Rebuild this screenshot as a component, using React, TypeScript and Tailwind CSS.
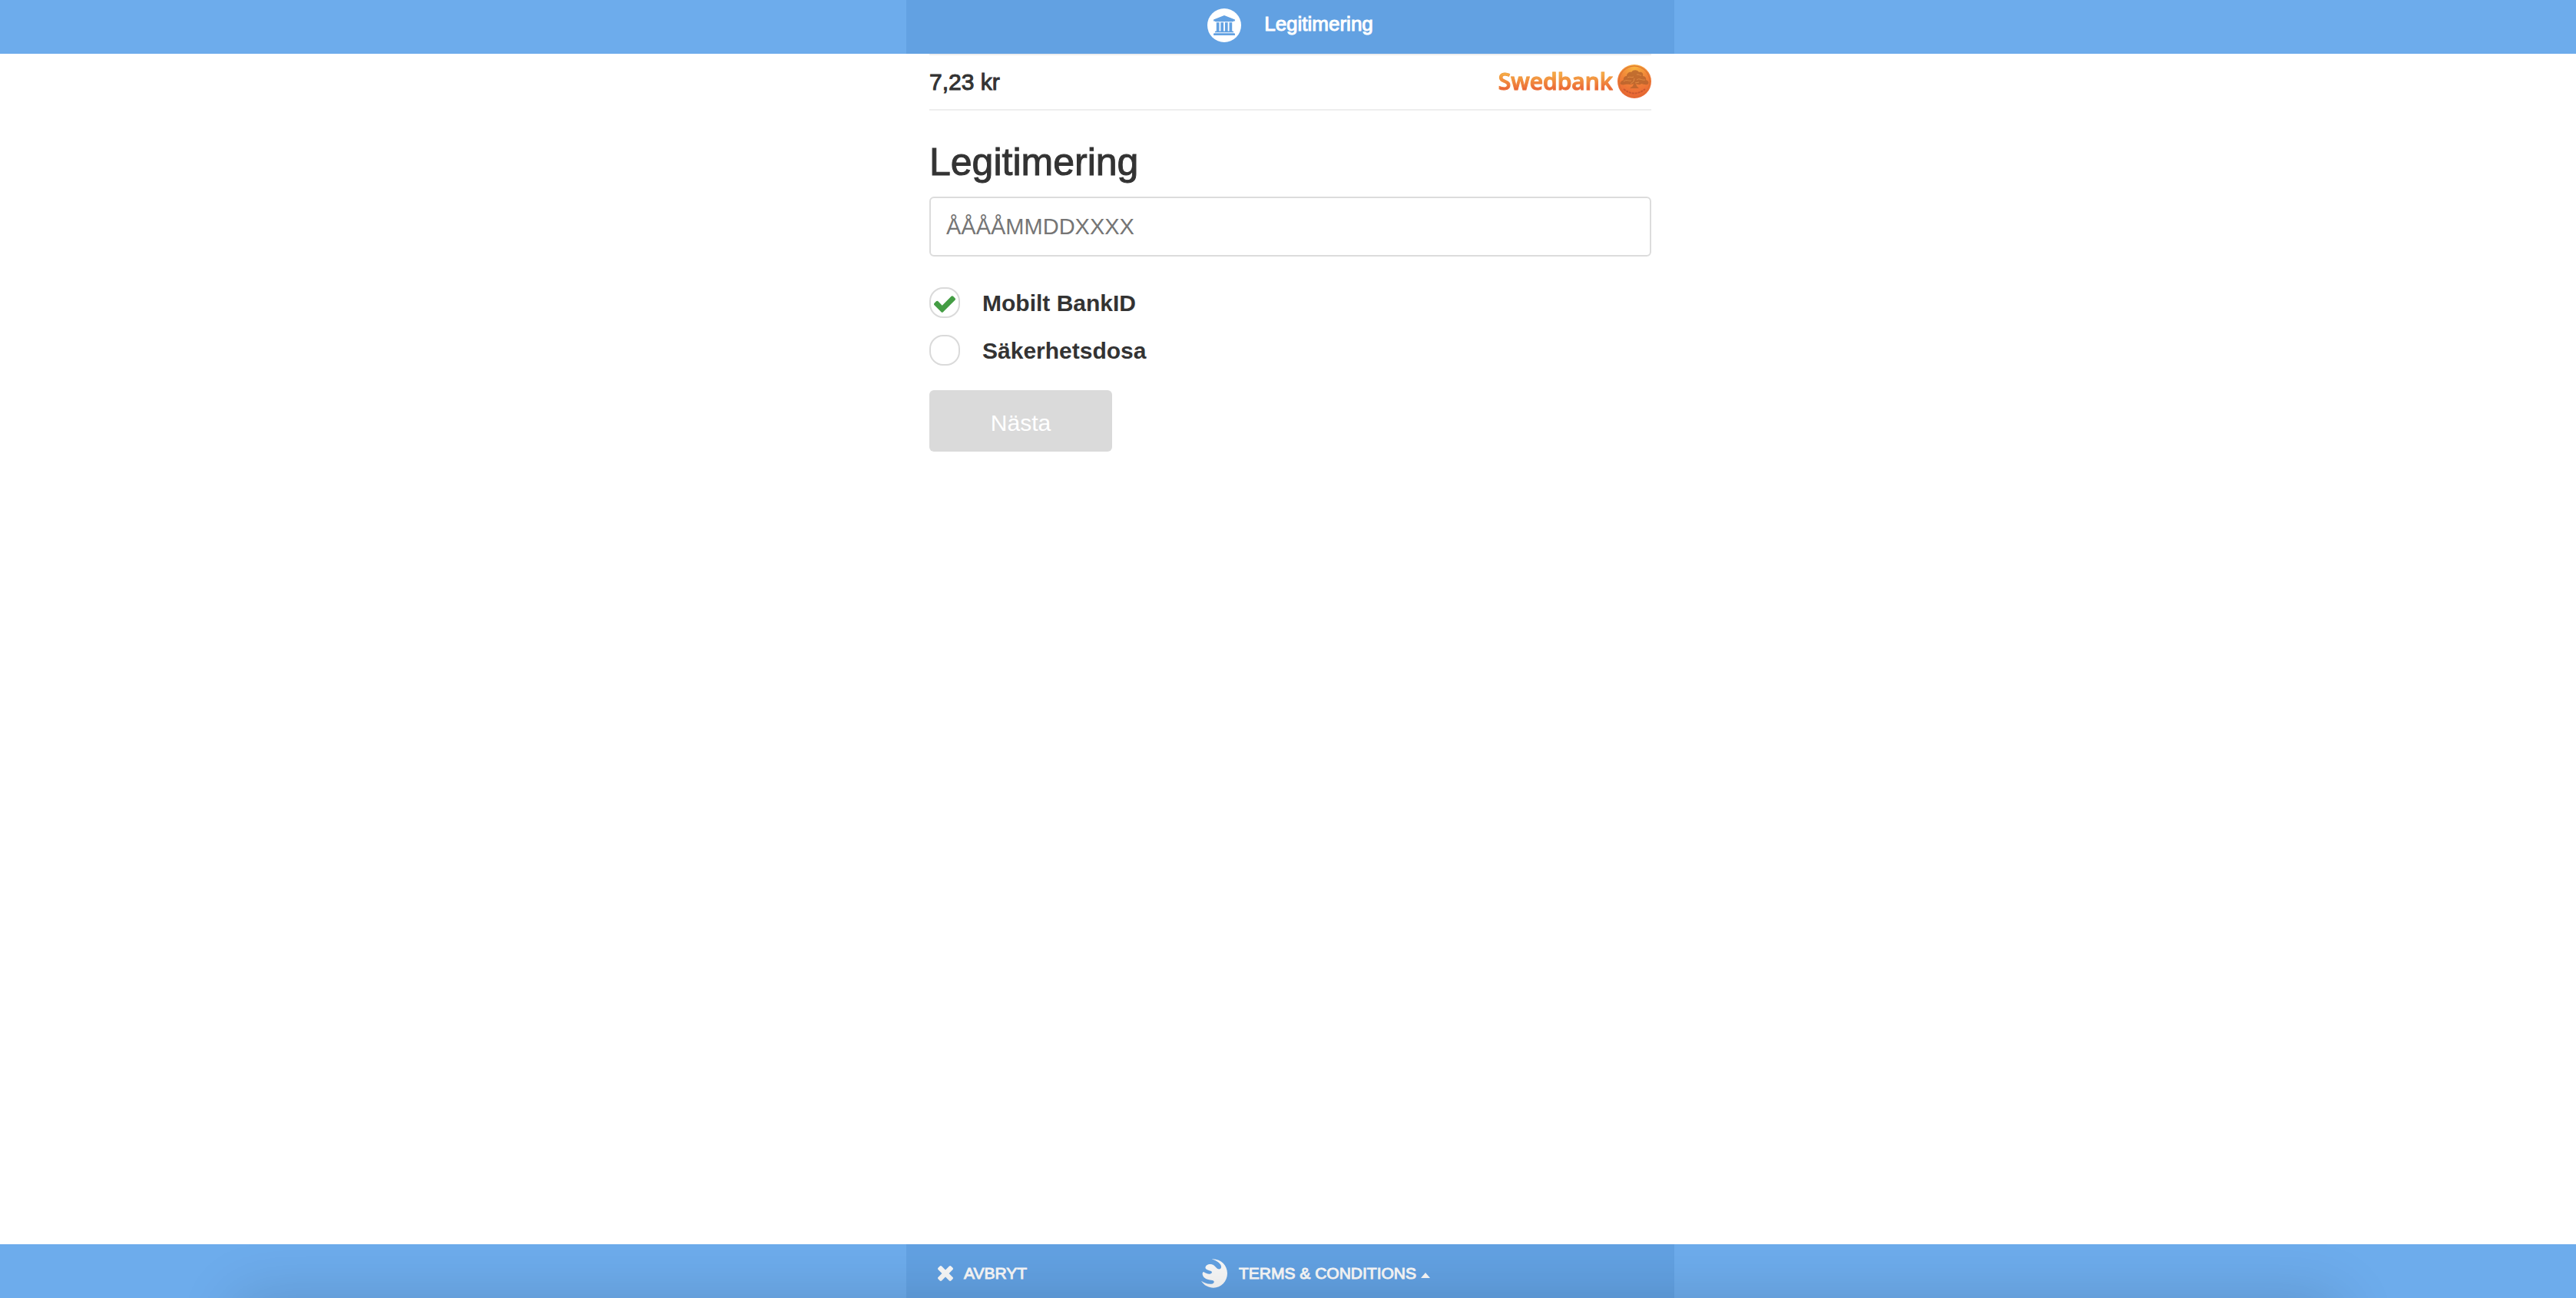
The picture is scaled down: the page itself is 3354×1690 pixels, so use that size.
import React, { useState } from "react";

function BankIcon() {
  return (
    <span className="flex size-11 items-center justify-center rounded-full bg-white">
      <svg viewBox="0 0 1920 1792" className="h-[26px] w-7 fill-[#62a1e2]" aria-hidden="true">
        <path d="M960 0l960 384v128h-128q0 26-20.5 45t-48.5 19h-1526q-28 0-48.5-19t-20.5-45h-128v-128zm-704 640h256v768h128v-768h256v768h128v-768h256v768h128v-768h256v768h59q28 0 48.5 19t20.5 45v64h-1664v-64q0-26 20.5-45t48.5-19h59v-768zm1595 960q28 0 48.5 19t20.5 45v128h-1920v-128q0-26 20.5-45t48.5-19h1782z" />
      </svg>
    </span>
  );
}

function CheckIcon() {
  return (
    <svg viewBox="121 334 1550 1188" className="h-[22px] w-7 fill-[#449d44]" aria-hidden="true">
      <path d="M1671 566q0 40-28 68l-724 724-136 136q-28 28-68 28t-68-28l-136-136-362-362q-28-28-28-68t28-68l136-136q28-28 68-28t68 28l294 295 656-657q28-28 68-28t68 28l136 136q28 28 28 68z" />
    </svg>
  );
}

function CloseIcon() {
  return (
    <svg viewBox="302 366 1188 1188" className="size-5 fill-current" aria-hidden="true">
      <path d="M1490 1322q0 40-28 68l-136 136q-28 28-68 28t-68-28l-294-294-294 294q-28 28-68 28t-68-28l-136-136q-28-28-28-68t28-68l294-294-294-294q-28-28-28-68t28-68l136-136q28-28 68-28t68 28l294 294 294-294q28-28 68-28t68 28l136 136q28 28 28 68t-28 68l-294 294 294 294q28 28 28 68z" />
    </svg>
  );
}

function GlobeIcon() {
  return (
    <svg viewBox="72 113 104 116" className="h-[38px] w-[34px] fill-current" aria-hidden="true">
      <path d="M114 114 C150 112 176 139 176 171 C176 203 151 228 121 228 C101 228 83 219 72 201 C82 208 96 214 112 213 C120 212 124 208 123 203 C121 198 114 198 106 197 C90 195 77 186 77 172 C77 168 79 165 82 165 C87 169 98 174 107 173 C113 172 116 168 114 164 C111 158 94 160 89 150 C87 142 96 134 108 134 C120 134 126 141 133 149 C138 155 148 156 151 149 C155 137 139 121 114 114Z" />
    </svg>
  );
}

function SwedbankLogo() {
  return (
    <div className="flex items-center gap-1.5 pb-0.5">
      <span className="bg-linear-to-b from-[#f5ad45] from-25% to-[#ea6436] to-75% bg-clip-text font-['Open_Sans',sans-serif] text-[30px] leading-10 font-semibold text-transparent [-webkit-text-stroke:1px_#f08a3c66]">
        Swedbank
      </span>
      <svg viewBox="0 0 44 44" className="size-11" aria-hidden="true">
        <defs>
          <radialGradient id="coin" cx="0.5" cy="0.1" r="0.9">
            <stop offset="0" stopColor="#f9b23f" />
            <stop offset="0.5" stopColor="#f08238" />
            <stop offset="1" stopColor="#ea6234" />
          </radialGradient>
        </defs>
        <circle cx="22" cy="22" r="22" fill="url(#coin)" />
        <circle cx="22" cy="22" r="20" fill="none" stroke="#d9702f" strokeWidth="1" />
        <path
          d="M20 28 L21 25 C17 27 13 25 10 26 C6 27 2 26 4 23 C5 21 7 21 8 20 C7 17 10 15 12 15 C12 11 16 9 18 10 C21 6 26 7 28 10 C32 9 34 12 33 15 C36 15 38 18 37 20 C40 21 42 24 39 26 C36 27 33 25 31 25 C29 27 26 26 24 25 L25 28 L28 31 H16Z"
          fill="#b5612c"
          opacity="0.8"
        />
        <path
          d="M8 22 C12 19 15 22 18 21 M13 17 C17 15 18 18 21 16 M25 13 C28 12 29 15 31 14 M25 20 C29 17 31 21 36 20 M17 25 L21 22 L22 18 M23 24 L28 23"
          fill="none"
          stroke="#e08a42"
          strokeWidth="1"
        />
        <path d="M8 32 Q22 43 36 32" fill="none" stroke="#c9582f" strokeWidth="2" strokeDasharray="3 1" />
      </svg>
    </div>
  );
}

const methods = [
  { id: "mobilt", label: "Mobilt BankID" },
  { id: "dosa", label: "Säkerhetsdosa" },
];

export default function App() {
  const [method, setMethod] = useState("mobilt");
  const [personId, setPersonId] = useState("");

  return (
    <div className="flex min-h-screen flex-col bg-white font-['Liberation_Sans',Arial,sans-serif] text-[#333]">
      <header className="bg-[#6dacec] pl-1.5">
        <div className="mx-auto flex h-[70px] max-w-[1000px] items-start justify-center gap-[30px] bg-[#62a1e2] pt-[11px] text-white">
          <BankIcon />
          <span className="text-[26px] leading-10 [-webkit-text-stroke:1px]">Legitimering</span>
        </div>
      </header>

      <main className="flex-1 pl-1.5">
        <div className="mx-auto max-w-[1000px] px-[30px]">
          <div className="flex h-[74px] items-center justify-between border-y-2 border-[#eee]">
            <span className="text-[30px] leading-9 [-webkit-text-stroke:1px]">7,23 kr</span>
            <SwedbankLogo />
          </div>

          <h1 className="mt-[37px] text-[50px] leading-[60px] [-webkit-text-stroke:1px]">
            <label htmlFor="person-id">Legitimering</label>
          </h1>
          <input
            id="person-id"
            type="text"
            value={personId}
            onChange={(e) => setPersonId(e.target.value)}
            placeholder="ÅÅÅÅMMDDXXXX"
            className="mt-[15px] block h-[78px] w-full rounded-md border-2 border-[#dcdcdc] px-5 text-[29px] placeholder:text-[#757575]"
          />

          <div className="mt-10 flex flex-col items-start gap-[22px]">
            {methods.map((m) => (
              <label key={m.id} className="flex h-10 items-center gap-[29px] text-[30px] font-bold">
                <input
                  type="radio"
                  name="method"
                  checked={method === m.id}
                  onChange={() => setMethod(m.id)}
                  className="sr-only"
                />
                <span className="flex size-10 items-center justify-center rounded-[18px] border-2 border-[#dadada] pt-1">
                  {method === m.id && <CheckIcon />}
                </span>
                {m.label}
              </label>
            ))}
          </div>

          <button
            type="button"
            className="mt-8 h-20 w-[238px] rounded-md bg-[#dadada] pt-1 text-center text-[30px] text-white"
          >
            Nästa
          </button>
        </div>
      </main>

      <footer className="relative overflow-hidden bg-[#6dacec] pl-1.5">
        <div className="mx-auto flex h-[70px] max-w-[1000px] items-center bg-[#62a1e2] pt-1.5 text-[21px] leading-7 text-[#f8f8f8]">
          <div className="w-96 pl-[41px]">
            <button type="button" className="flex items-center gap-3.5 [-webkit-text-stroke:1px]">
              <CloseIcon />
              AVBRYT
            </button>
          </div>
          <a href="#terms" className="flex items-center gap-[15px]">
            <GlobeIcon />
            <span className="flex items-center gap-1.5 [-webkit-text-stroke:1px]">
              TERMS &amp; CONDITIONS
              <svg viewBox="0 0 12 7" className="mt-1 h-[7px] w-3 fill-current" aria-hidden="true">
                <path d="M6 0 12 7H0Z" stroke="none" />
              </svg>
            </span>
          </a>
        </div>
        <div className="pointer-events-none absolute inset-x-[310px] top-full h-24 shadow-[0_0_80px_rgba(0,0,0,0.15)]" />
      </footer>
    </div>
  );
}
